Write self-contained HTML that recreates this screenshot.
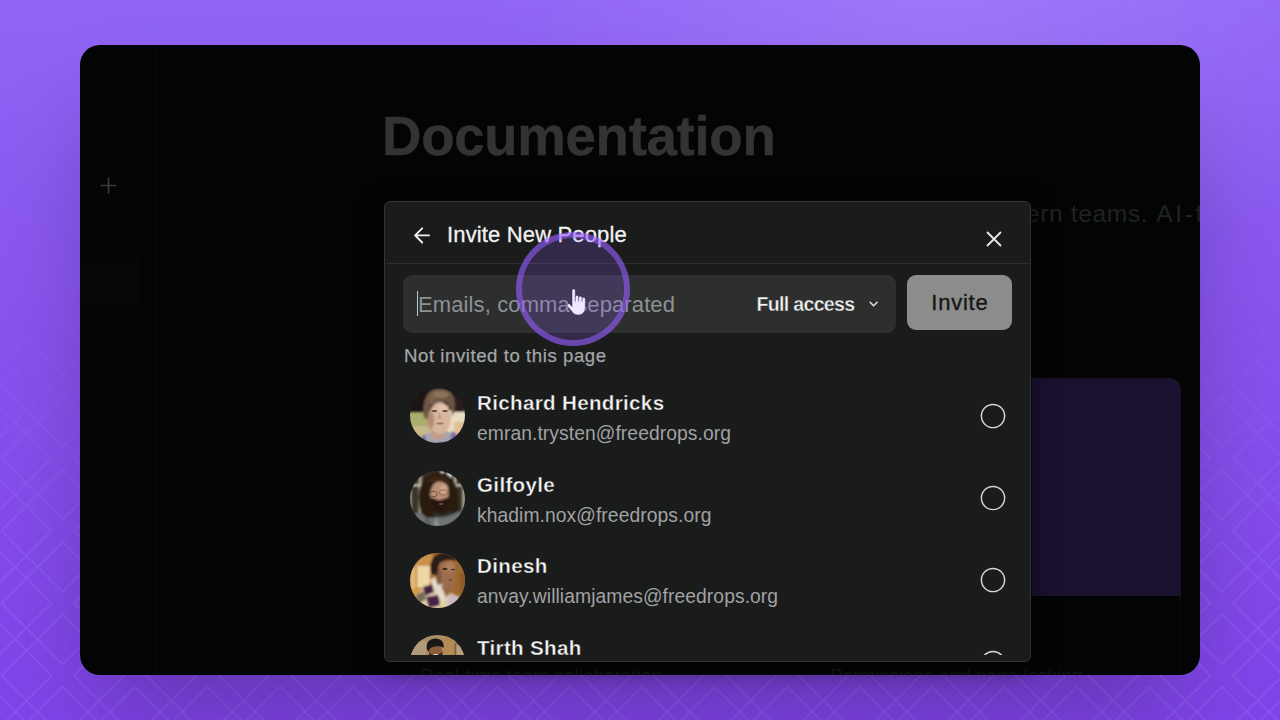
<!DOCTYPE html>
<html>
<head>
<meta charset="utf-8">
<style>
*{box-sizing:border-box;margin:0;padding:0}
html,body{width:1280px;height:720px;overflow:hidden}
body{font-family:"Liberation Sans",sans-serif;position:relative;background:#8450ea}
#bg{position:absolute;left:0;top:0;width:1280px;height:720px;
 background:
  radial-gradient(ellipse 460px 300px at 940px 0px, rgba(170,135,250,.55), rgba(170,135,250,0) 100%),
  linear-gradient(180deg,#9165f6 0%,#8853ee 45%,#7f44e8 100%);}
#pat{position:absolute;left:0;top:0;width:1280px;height:720px}
#shadow{position:absolute;left:80px;top:45px;width:1120px;height:629.600px;border-radius:20px;box-shadow:0 50px 100px -24px rgba(0,0,0,.28)}
#win{position:absolute;left:80px;top:45px;width:1120px;height:629.600px;border-radius:20px;background:#030504;overflow:hidden}
#side-div{position:absolute;left:76px;top:0;width:1px;height:629px;background:#0c0e0d}
#side-hl{position:absolute;left:0;top:212px;width:61px;height:49px;background:#070606}
#plus{position:absolute;left:20px;top:132px;width:17px;height:17px}
#h1{position:absolute;left:302px;top:62px;font-size:54.600px;font-weight:bold;color:#323333;letter-spacing:-.3px;-webkit-text-stroke:.5px #323333;white-space:nowrap;line-height:60px}
#sub{position:absolute;left:946px;top:155px;font-size:24.500px;letter-spacing:.65px;color:#202222;white-space:nowrap;line-height:28px}
#card{position:absolute;left:700px;top:333px;width:401px;height:218px;background:#1a112e;border-radius:12px 12px 0 0}
#modal{position:absolute;left:384px;top:201px;width:647px;height:461px;background:#1a1b1b;border:1px solid #343535;border-radius:6px;overflow:hidden;box-shadow:0 0 0 1px rgba(0,0,0,.5),0 6px 24px rgba(0,0,0,.5)}
#mclip{position:absolute;left:1px;top:0;width:644px;height:453px;overflow:hidden}
#hdiv{position:absolute;left:-1px;top:61px;width:647px;height:1px;background:#2d2e2e}
#title{position:absolute;left:61px;top:20px;font-size:22px;letter-spacing:.15px;-webkit-text-stroke:.3px #f2f2f2;color:#f2f2f2;white-space:nowrap;line-height:26px}
#input{position:absolute;left:17px;top:73px;width:493px;height:58px;background:#2d2f2f;border-radius:9px}
#ph{position:absolute;left:32px;top:89px;font-size:22px;letter-spacing:.12px;color:#8d9194;white-space:nowrap;line-height:28px}
#caret{position:absolute;left:31px;top:89px;width:1.400px;height:25px;background:#c4c4c4}
#fa{position:absolute;left:370.500px;top:91px;-webkit-text-stroke:.4px #2d2f2f;font-size:19.600px;letter-spacing:-.7px;font-weight:bold;color:#f4f4f4;white-space:nowrap;line-height:22px}
#btn{position:absolute;left:521px;top:73px;width:105px;height:55px;background:#8b8d8b;border-radius:9px;color:#171717;font-size:22px;letter-spacing:.75px;text-indent:.75px;text-align:center;line-height:55px;-webkit-text-stroke:.35px #171717}
#ni{position:absolute;left:18px;top:142.400px;font-size:18.600px;letter-spacing:.56px;-webkit-text-stroke:.25px #a3a6a8;color:#a3a6a8;white-space:nowrap;line-height:24px}
.row{position:absolute;left:0;width:644px;height:82px}
.av{position:absolute;left:23.700px;top:12.300px;width:55px;height:55px}
.nm{position:absolute;left:91px;top:13px;-webkit-text-stroke:.4px #1a1b1b;font-size:20.600px;letter-spacing:.32px;font-weight:bold;color:#f5f5f5;white-space:nowrap;line-height:26px}
.em{position:absolute;left:91px;top:46.100px;font-size:19.300px;letter-spacing:.07px;color:#a0a2a3;white-space:nowrap;line-height:22px}
.rd{position:absolute;left:592px;top:24.900px;width:30px;height:30px}
#ring{position:absolute;left:515.800px;top:232.200px;width:114px;height:114px;border-radius:50%;background:rgba(150,95,255,.2);background-clip:padding-box;border:6px solid rgba(150,95,255,.63)}
#hand{position:absolute;left:565px;top:287px;width:24px;height:30px}
</style>
</head>
<body>
<div id="bg"></div>
<svg id="pat" width="1280" height="720" viewBox="0 0 1280 720">
 <defs>
  <pattern id="lat" x="-9.72" y="-12.68" width="72.44" height="72.44" patternUnits="userSpaceOnUse">
   <path d="M36.22 11.22L61.22 36.22L36.22 61.22L11.22 36.22ZM0.00 -25.00L25.00 0.00L0.00 25.00L-25.00 0.00ZM72.44 -25.00L97.44 0.00L72.44 25.00L47.44 0.00ZM0.00 47.44L25.00 72.44L0.00 97.44L-25.00 72.44ZM72.44 47.44L97.44 72.44L72.44 97.44L47.44 72.44ZM36.22 -11.22L47.44 0.00L36.22 11.22L25.00 0.00ZM36.22 61.22L47.44 72.44L36.22 83.66L25.00 72.44Z" stroke="#c9b4ff" stroke-width="1.4" fill="none"/>
  </pattern>
  <linearGradient id="fade" x1="0" y1="0" x2="0" y2="1">
   <stop offset="0.34" stop-color="#fff" stop-opacity="0"/>
   <stop offset="0.8" stop-color="#fff" stop-opacity="1"/>
  </linearGradient>
  <mask id="fm"><rect width="1280" height="720" fill="url(#fade)"/></mask>
 </defs>
 <rect width="1280" height="720" fill="url(#lat)" opacity=".16" mask="url(#fm)"/>
</svg>
<div id="shadow"></div>
<div id="win">
 <div id="side-hl"></div>
 <div id="side-div"></div>
 <svg id="plus" viewBox="0 0 17 17"><path d="M8.5 0.5V16.5M0.5 8.5H16.5" stroke="#3a3b3b" stroke-width="1.6" fill="none"/></svg>
 <div id="h1">Documentation</div>
 <div id="sub">ern teams. <span style="letter-spacing:2.700px;margin-left:.5px">AI-first</span></div>
 <div id="card"></div><div style="position:absolute;left:340px;top:620px;font-size:19px;color:#151616;white-space:nowrap;line-height:22px">Real-time team collaboration</div><div style="position:absolute;left:750px;top:620px;font-size:19px;color:#151616;white-space:nowrap;line-height:22px">Permissions and page locking</div><div style="position:absolute;left:1100px;top:551px;width:1px;height:80px;background:#0b0d0c"></div>
</div>
<div id="modal">
 <div id="mclip">
 <svg style="position:absolute;left:26px;top:24px" width="20" height="20" viewBox="0 0 20 20"><path d="M17 9.400H3.500M10.200 2.300L3.100 9.400l7.100 7.100" stroke="#f0f0f0" stroke-width="1.9" fill="none" stroke-linecap="round" stroke-linejoin="round"/></svg>
 <div id="title">Invite New People</div>
 <svg style="position:absolute;left:599px;top:28px" width="18" height="18" viewBox="0 0 18 18"><path d="M2.500 2.500l13 13M15.500 2.500l-13 13" stroke="#e8e8e8" stroke-width="1.8" fill="none" stroke-linecap="round"/></svg>
 <div id="hdiv"></div>
 <div id="input"></div>
 <div id="caret"></div>
 <div id="ph">Emails, comma separated</div>
 <div id="fa">Full access</div>
 <svg style="position:absolute;left:481px;top:97px" width="12" height="10" viewBox="0 0 12 10"><path d="M3.100 3.200l3.500 3.500 3.500-3.500" stroke="#e0e0e0" stroke-width="1.5" fill="none" stroke-linecap="round" stroke-linejoin="round"/></svg>
 <div id="btn">Invite</div>
 <div id="ni">Not invited to this page</div>

 <div class="row" style="top:175px"><svg class="av" style="top:11.3px" viewBox="0 0 55 55"><defs><clipPath id="c1"><circle cx="27.500" cy="27.500" r="27.500"/></clipPath><filter id="b1" x="-20%" y="-20%" width="140%" height="140%"><feGaussianBlur stdDeviation="1.3"/></filter><filter id="b2" x="-20%" y="-20%" width="140%" height="140%"><feGaussianBlur stdDeviation="0.7"/></filter></defs>
<g clip-path="url(#c1)"><rect width="55" height="55" fill="#1b1413"/>
<g filter="url(#b1)"><rect x="-3" y="24" width="30" height="34" fill="#a9ad6e"/><rect x="-3" y="38" width="24" height="20" fill="#c9b98a"/><rect x="36" y="22" width="22" height="36" fill="#e9dcc2"/><rect x="44" y="34" width="14" height="14" fill="#e0bf95"/>
<rect x="43" y="9" width="12" height="15" fill="#2c1f1a"/>
<path d="M8 55L14 47L24 43L36 43L46 46L52 55Z" fill="#a3a6b3"/><path d="M42 43l5 3-2 8-5-1z" fill="#7a689f"/><path d="M10 50l5-4 2 9h-7z" fill="#7d7a9a"/>
<rect x="21.500" y="40" width="13" height="11" fill="#c49c84"/>
<ellipse cx="29.800" cy="30" rx="11.200" ry="16" fill="#d8b59e"/><ellipse cx="21" cy="32" rx="3.200" ry="9" fill="#b58c74"/><ellipse cx="33" cy="20" rx="6" ry="4" fill="#e2c2ac"/>
<path d="M13.500 27C12 16 15 6 21 2.500C26 -.5 35 -.5 40 3C45 7 45.500 16 44.500 22C44 25 43 27 42 28.500C42.500 22 40 17 36 14.500C31 13 25 14.500 21 17.500C19 21 18.500 26 17.500 31.500C15 31 14 29 13.500 27Z" fill="#6c5542"/><ellipse cx="30" cy="6.500" rx="9" ry="3.600" fill="#8a735c"/><ellipse cx="22" cy="11" rx="4" ry="5" fill="#7a624c"/></g>
<g filter="url(#b2)"><ellipse cx="24.500" cy="23" rx="2.800" ry="1.100" fill="#5a4436"/><ellipse cx="35" cy="23" rx="2.800" ry="1.100" fill="#5a4436"/><ellipse cx="30" cy="35.500" rx="3.600" ry="1" fill="#a8705f"/><path d="M29.500 24l-1.800 7h4.200z" fill="#c49a82"/></g>
</g></svg><div class="nm">Richard Hendricks</div><div class="em" style="top:46.100px">emran.trysten@freedrops.org</div><svg class="rd" style="top:23.9px" viewBox="0 0 30 30"><circle cx="15" cy="15" r="11.600" fill="none" stroke="#d6d6d6" stroke-width="1.450"/></svg></div>
 <div class="row" style="top:257px"><svg class="av" style="top:12.0px" viewBox="0 0 55 55"><defs><clipPath id="c2"><circle cx="27.500" cy="27.500" r="27.500"/></clipPath></defs>
<g clip-path="url(#c2)"><rect width="55" height="55" fill="#39332a"/>
<g filter="url(#b1)"><rect x="8.500" y="3" width="3" height="40" fill="#b5ad96"/><rect x="2" y="13" width="10" height="2.500" fill="#cbc4ad"/><rect x="30.500" y="-2" width="3.500" height="14" fill="#e4e4e2"/><rect x="37" y="0" width="5" height="12" fill="#dfe6ea"/><rect x="44" y="5" width="2.500" height="36" fill="#c2bca6"/><rect x="44" y="13" width="10" height="2.500" fill="#cbc4ad"/><rect x="52" y="14" width="4" height="30" fill="#9d9c8c"/><rect x="-1" y="18" width="3" height="26" fill="#8e8b7c"/>
<path d="M-2 57L3 43L16 39L40 39L52 41L57 57Z" fill="#6f7375"/><path d="M14 40l8 15h-6z" fill="#5b5e60"/><path d="M26 46l-2 9h5z" fill="#929698"/>
<path d="M9 32C7 14 15 1.500 28 1.500C41 1.500 48 12 48 26C49 32 50 37 48 41L38 45L19 47C12 45 9.500 40 9 32Z" fill="#2c1a10"/>
<path d="M16 12C20 4 32 3 38 9L40 20L30 10Z" fill="#3e2617"/>
<ellipse cx="29.500" cy="23" rx="9.200" ry="12.500" fill="#bb9078"/><ellipse cx="34" cy="18" rx="4" ry="5" fill="#d0a78b"/>
<path d="M20.500 27C24 26.500 27 29.500 30 29C33 28.500 36 26.500 39 26.500C40 33 37 39.500 31 41.500C25.500 41.500 21.500 35 20.500 27Z" fill="#26160f"/>
<path d="M24 41C28 45 36 44 41 39L43 42C38 47 28 48 23 44Z" fill="#2d3032"/></g>
<g filter="url(#b2)"><rect x="19" y="20.500" width="8" height="5" rx="2" fill="none" stroke="#6a4f40" stroke-width=".9"/><rect x="29.500" y="19" width="8" height="5" rx="2" fill="none" stroke="#8a6f50" stroke-width=".9"/><ellipse cx="31" cy="33" rx="2.500" ry=".8" fill="#8c5e4c"/></g>
</g></svg><div class="nm">Gilfoyle</div><div class="em" style="top:46.300px">khadim.nox@freedrops.org</div><svg class="rd" style="top:24.1px" viewBox="0 0 30 30"><circle cx="15" cy="15" r="11.600" fill="none" stroke="#d6d6d6" stroke-width="1.450"/></svg></div>
 <div class="row" style="top:338px"><svg class="av" style="top:12.9px" viewBox="0 0 55 55"><defs><clipPath id="c3"><circle cx="27.500" cy="27.500" r="27.500"/></clipPath></defs>
<g clip-path="url(#c3)"><rect width="55" height="55" fill="#a8702f"/>
<g filter="url(#b1)"><rect x="-2" y="-2" width="24" height="16" fill="#c9924a"/><rect x="7" y="13" width="13" height="22" fill="#efd6a6"/><rect x="0" y="14" width="6" height="22" fill="#e2b878"/><rect x="1" y="36" width="14" height="8" fill="#d99a4a"/><rect x="44" y="4" width="12" height="40" fill="#9c682e"/><rect x="50" y="20" width="6" height="20" fill="#8f5c28"/>
<path d="M4 57L6 42L16 33L24 30L40 40L49 44L52 57Z" fill="#dccbb0"/>
<path d="M13 34l9-3 2 8-9 4z" fill="#44203f"/><path d="M16 44l12-2 3 10-12 3z" fill="#472244"/><path d="M6 42l7-4 3 8-9 6z" fill="#7a6a58"/><path d="M40 42l8 2-2 10-9 1z" fill="#cdb6c6"/><path d="M30 46l6 1-2 9h-5z" fill="#d9cf9a"/>
<path d="M20 27L24 24L36 34L33 52L29 44Z" fill="#e6d8cc"/>
<path d="M31 33L44 30L41 40L36 44Z" fill="#96684b"/>
<ellipse cx="36.500" cy="20" rx="9.500" ry="13" fill="#9d6e4e"/><ellipse cx="40" cy="14" rx="5" ry="5" fill="#ad7e5c"/><ellipse cx="29" cy="24" rx="3" ry="8" fill="#83583e"/>
<path d="M20.500 18C19 8 24 0 34 0C42 0 46 4 46 8C40 6 34 7 30 10C28 13 28 18 27 22C24 22 21 21 20.500 18Z" fill="#2a1b13"/></g>
<g filter="url(#b2)"><ellipse cx="35" cy="16" rx="2.600" ry=".9" fill="#3a241a"/><ellipse cx="43" cy="16.500" rx="2" ry=".8" fill="#3a241a"/><ellipse cx="40.500" cy="27" rx="2.400" ry=".8" fill="#6e4434"/></g>
</g></svg><div class="nm">Dinesh</div><div class="em" style="top:46.200px">anvay.williamjames@freedrops.org</div><svg class="rd" style="top:25.3px" viewBox="0 0 30 30"><circle cx="15" cy="15" r="11.600" fill="none" stroke="#d6d6d6" stroke-width="1.450"/></svg></div>
 <div class="row" style="top:420px"><svg class="av" style="top:12.6px" viewBox="0 0 55 55"><defs><clipPath id="c4"><circle cx="27.500" cy="27.500" r="27.500"/></clipPath></defs>
<g clip-path="url(#c4)"><rect width="55" height="55" fill="#a98f68"/>
<g filter="url(#b2)"><rect x="0" y="6" width="16" height="18" fill="#b29b78"/><rect x="34" y="0" width="12" height="24" fill="#b48a54"/><rect x="44.500" y="8" width="2" height="16" fill="#7e6440"/><rect x="46.500" y="10" width="9" height="14" fill="#b9a078"/>
<ellipse cx="25.800" cy="17" rx="6.800" ry="7.500" fill="#8c5c3c"/><path d="M16.800 14C16 7 20 3.600 25.500 3.600C31 3.600 34.500 7 33.600 13C31 10.500 23 10.500 20 13.500L18.500 17Z" fill="#1d1712"/><path d="M19 17c1 4 11 4 13.500 0l-.5 7h-12z" fill="#2a1b14"/><rect x="23.500" y="19" width="4.500" height="1.600" fill="#d8d0c8"/></g>
</g></svg><div class="nm">Tirth Shah</div><div class="em" style="top:46.200px">tirth@freedrops.org</div><svg class="rd" style="top:25.5px" viewBox="0 0 30 30"><circle cx="15" cy="15" r="11.600" fill="none" stroke="#d6d6d6" stroke-width="1.450"/></svg></div>
 </div>
</div>
<div id="ring"></div>
<svg id="hand" viewBox="0 0 24 30"><path d="M7 3.800C7 2.800 7.700 2.100 8.650 2.100C9.600 2.100 10.300 2.800 10.300 3.800V10C10.300 9 11 8.500 11.900 8.500C12.900 8.500 13.600 9.200 13.600 10.200V10.600C13.800 9.700 14.500 9.200 15.300 9.200C16.300 9.200 17 9.900 17 10.900V11.600C17.200 10.800 17.900 10.300 18.600 10.300C19.600 10.300 20.300 11 20.300 12V20C20.300 24.500 17.500 28 13.300 28C10 28 8.300 26.800 6.800 24.300L2.600 19.400C1.900 18.500 2 17.400 2.800 16.900C3.600 16.400 4.500 16.600 5.200 17.400L7 19.500Z" fill="#efe6ff" stroke="#2c2048" stroke-opacity=".55" stroke-width=".8"/><path d="M13.600 10.600V14.500M17 11.600V14.800M10.300 10V14.500" stroke="#3a2c5c" stroke-opacity=".7" stroke-width=".9" fill="none"/></svg>
</body>
</html>
